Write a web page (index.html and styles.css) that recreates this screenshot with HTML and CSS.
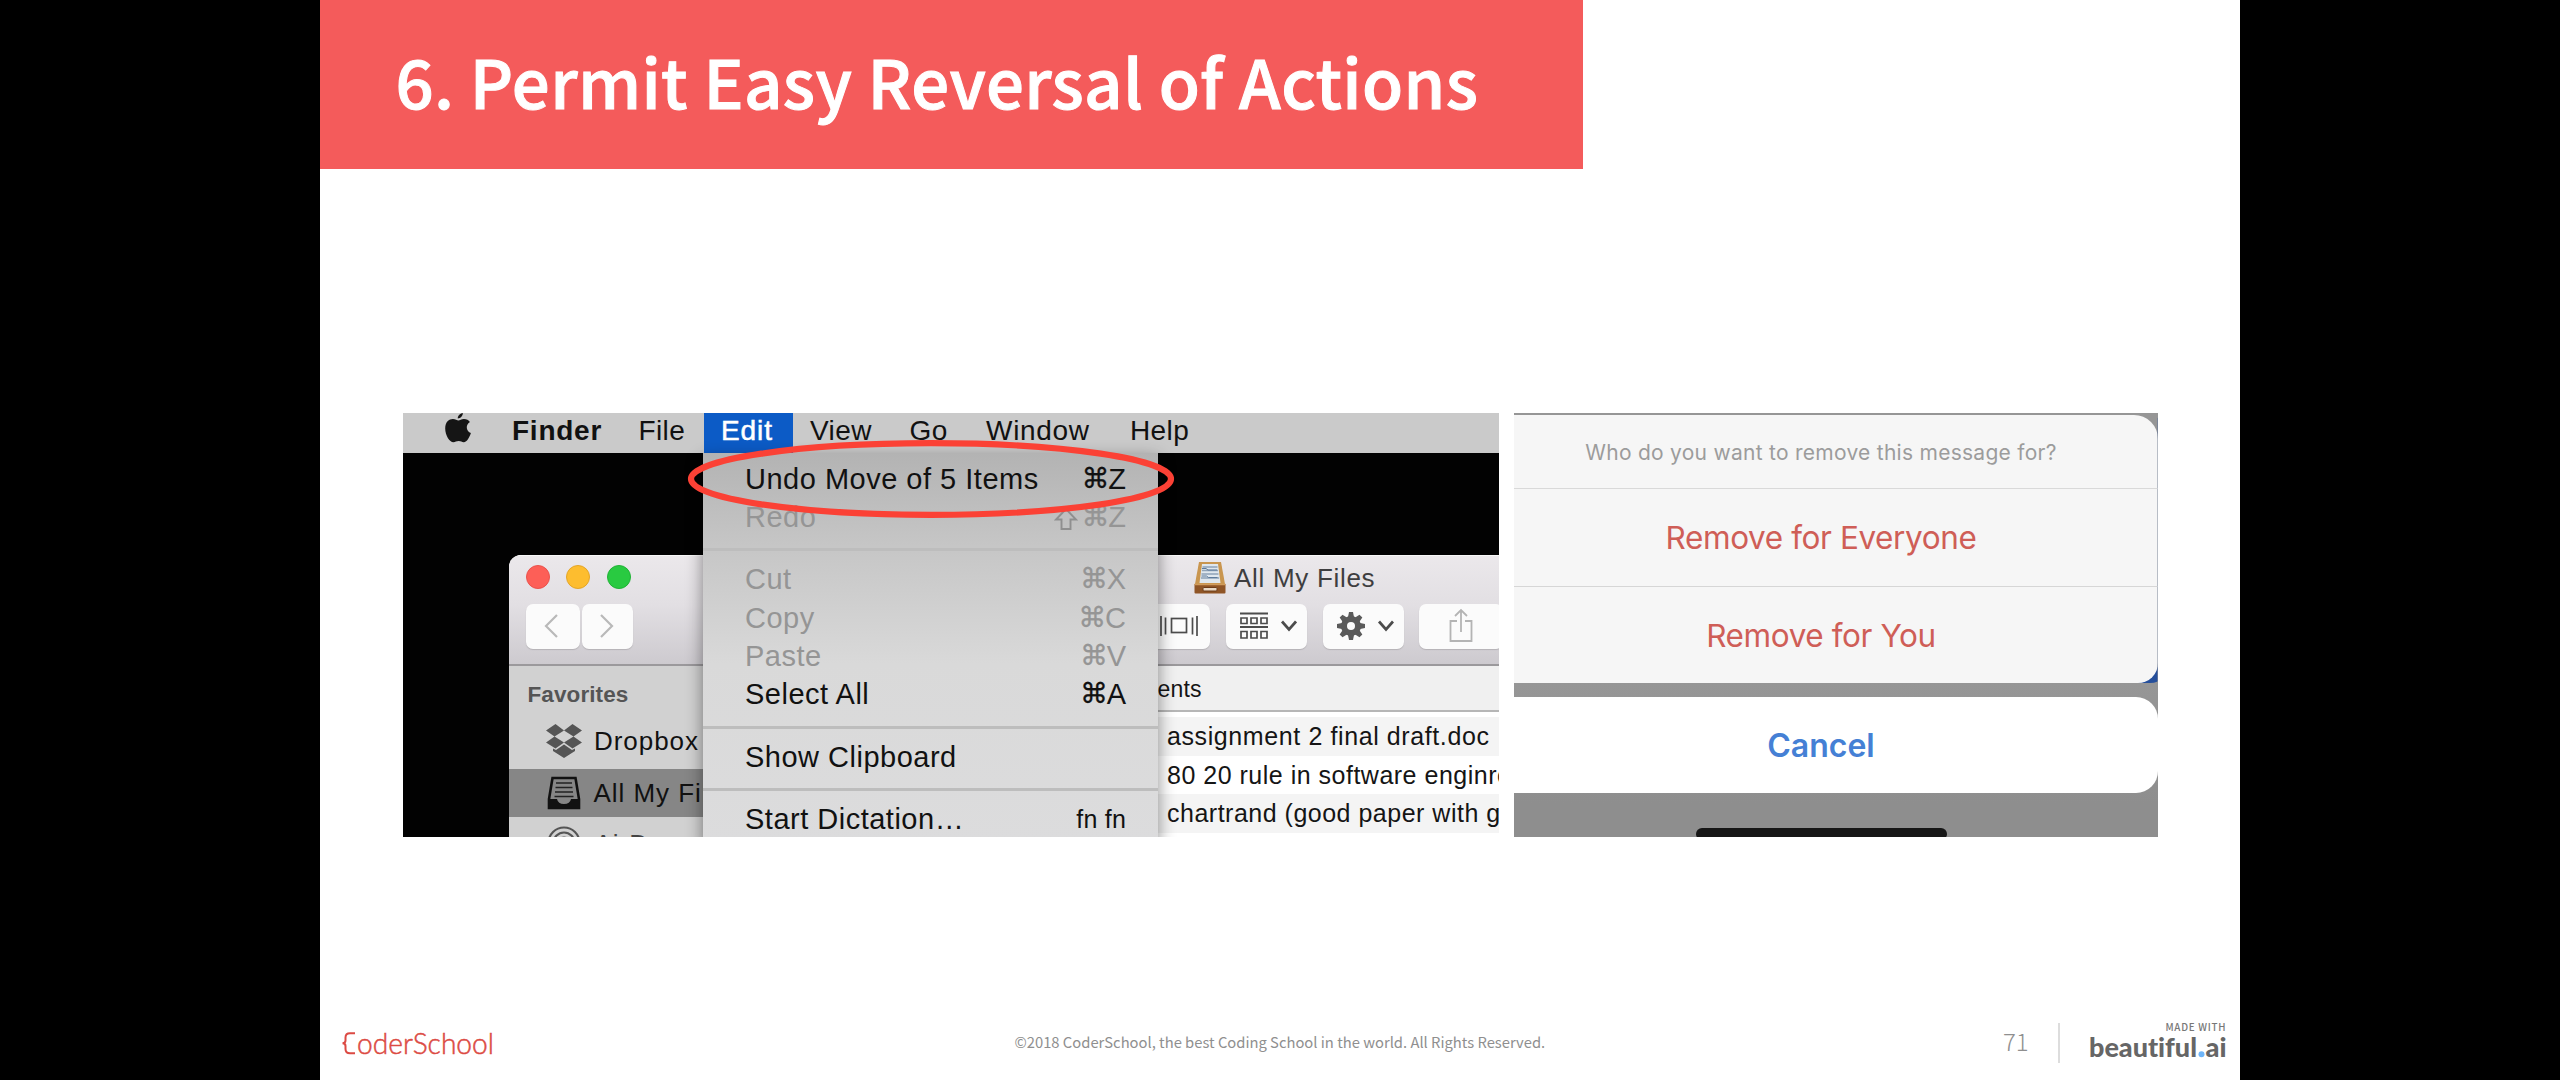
FILE: index.html
```html
<!DOCTYPE html>
<html lang="en">
<head>
<meta charset="utf-8">
<title>6. Permit Easy Reversal of Actions</title>
<link rel="stylesheet" href="styles.css">
</head>
<body>
<main class="slide">
  <h1 class="banner"><span>6. Permit Easy Reversal of Actions</span></h1>

  <section class="examples">
    <div class="mac">
      <nav class="menubar">
        <svg class="apple" width="26" height="31" viewBox="0 0 26 31"><path fill="#151515" d="M17.8 0c.2 2.500-2.200 5.500-5 5.500C12.500 3 15 .4 17.800 0ZM13.500 7.400c1.300 0 3-1.500 5.500-1.400 2.600.1 4.700 1.200 5.900 3-4.700 3-3.800 9.200 1 11-1.500 4.500-4 9-7 9.200-2 .1-2.800-1.200-5.200-1.200-2.500 0-3.300 1.200-5.200 1.200C4.500 29.200.2 22 .2 15.400.2 9 4 6 7.900 6c2.500 0 4.100 1.400 5.600 1.400Z"/></svg>
        <b>Finder</b><span>File</span><span class="open">Edit</span><span>View</span><span>Go</span><span>Window</span><span>Help</span>
      </nav>
      <div class="desktop">
        <div class="window">
          <header class="chrome">
            <div class="titlebar">
              <i class="light red"></i><i class="light yellow"></i><i class="light green"></i>
              <div class="wtitle">
                <svg width="32" height="33" viewBox="0 0 32 33"><path fill="#c9964f" d="M5 1h22l4 22H1z"/><path fill="#dfe7ee" d="M8 3h16l2.500 19h-21z"/><path d="M8.500 6h15M8 9.500h16M7.500 13h17M7 17h18" stroke="#8fa3b8" stroke-width="1.300"/><path d="M8 7.500h4l2 1.500h9M7.500 15h5l2 1.500h9" stroke="#5d7b9c" fill="none"/><path fill="#8f5526" d="M.5 23h31v8.500q0 1-1 1h-29q-1 0-1-1z"/><path d="M.5 23.500h31" stroke="#d09c5c" stroke-width="1.500"/><rect x="9" y="26.500" width="14" height="3.500" rx="1" fill="#e9d9c6" stroke="#6c3c18"/></svg>
                <span>All My Files</span>
              </div>
            </div>
            <div class="toolbar">
              <div class="btn back"><svg width="14" height="24" viewBox="0 0 14 24"><path d="M13 1 2 12l11 11" fill="none" stroke="#b9b9b9" stroke-width="2.200"/></svg></div>
              <div class="btn fwd"><svg width="14" height="24" viewBox="0 0 14 24"><path d="M1 1l11 11L1 23" fill="none" stroke="#b9b9b9" stroke-width="2.200"/></svg></div>
              <div class="btn flow"><svg width="38" height="24" viewBox="0 0 38 24"><path d="M1 2v20M5.500 3.500v17M32.500 3.500v17M37 2v20" stroke="#4c4c4c" stroke-width="1.700"/><rect x="11.500" y="4.500" width="15" height="14" fill="none" stroke="#4c4c4c" stroke-width="1.700"/></svg></div>
              <div class="btn arrange"><svg width="57" height="28" viewBox="0 0 57 28"><path d="M0 1.500h28M0 15h28" stroke="#4c4c4c" stroke-width="1.800"/><g fill="none" stroke="#4c4c4c" stroke-width="1.700"><path d="M1 6h6v5.500H1zM11 6h6v5.500h-6zM21 6h6v5.500h-6zM1 19.500h6V26H1zM11 19.500h6V26h-6zM21 19.500h6V26h-6z"/><path d="m42 9.500 7 8 7-8" stroke-width="2.700"/></g></svg></div>
              <div class="btn gear"><svg width="57" height="28" viewBox="0 0 57 28"><g transform="translate(14 14)"><g fill="#5a5a5a"><circle r="10"/><path id="tooth" d="M-3.200-8-2-14h4l1.200 6z"/><use href="#tooth" transform="rotate(45)"/><use href="#tooth" transform="rotate(90)"/><use href="#tooth" transform="rotate(135)"/><use href="#tooth" transform="rotate(180)"/><use href="#tooth" transform="rotate(225)"/><use href="#tooth" transform="rotate(270)"/><use href="#tooth" transform="rotate(315)"/></g><circle r="4" fill="#fbfbfb"/></g><path d="m42 9.500 7 8 7-8" fill="none" stroke="#4c4c4c" stroke-width="2.700"/></svg></div>
              <div class="btn share"><svg width="24" height="36" viewBox="0 0 24 36"><path d="M8 13H1.500v20h21V13H16M12 24V2M6 8l6-6 6 6" fill="none" stroke="#b4b4b4" stroke-width="1.800"/></svg></div>
            </div>
          </header>
          <div class="wbody">
            <aside class="sidebar">
              <div class="heading">Favorites</div>
              <div class="place"><svg width="36" height="34" viewBox="0 0 36 34"><path fill="#555" d="M9.500 0 18 6.500 8.500 12.500 0 6.500zM26.500 0 18 6.500l9.500 6L36 6.500zM0 18.500l8.500-6 9.500 6-8.500 6zM36 18.500l-8.500-6-9.500 6 8.500 6zM18 20.500l8 5.500 3-1.500v2.500l-11 7-11-7v-2.500l3 1.500z"/></svg><span>Dropbox</span></div>
              <div class="place selected"><svg width="34" height="34" viewBox="0 0 34 34"><path d="M5.500 2h23l3.500 21v9H2v-9z" fill="none" stroke="#111" stroke-width="2.600"/><path fill="#111" d="M2 23h8q1 5 7 5t7-5h8v9H2z"/><path d="M9 7h16M8.500 11.500h17M8 16h18M7.500 20.500h19" stroke="#222" stroke-width="1.700"/></svg><span>All My Files</span></div>
              <div class="place"><svg width="34" height="34" viewBox="0 0 34 34"><g fill="none" stroke="#555" stroke-width="2.200"><circle cx="17" cy="17" r="15.500"/><circle cx="17" cy="17" r="10.500"/><circle cx="17" cy="17" r="5.500"/></g></svg><span>AirDrop</span></div>
            </aside>
            <div class="files">
              <div class="group">ents</div>
              <div class="file odd">assignment 2 final draft.doc</div>
              <div class="file long">80 20 rule in software enginre</div>
              <div class="file odd long">chartrand (good paper with g</div>
            </div>
          </div>
        </div>
      </div>
      <div class="menu">
        <div class="item"><span>Undo Move of 5 Items</span><kbd><i>⌘</i>Z</kbd></div>
        <div class="item off"><span>Redo</span><kbd><svg class="shift" width="24" height="24" viewBox="0 0 24 24"><path d="M12 2 2 12.500h5.500V22h9v-9.500H22z" fill="none" stroke="#8f8f8f" stroke-width="1.900"/></svg><i>⌘</i>Z</kbd></div>
        <hr>
        <div class="item off"><span>Cut</span><kbd><i>⌘</i>X</kbd></div>
        <div class="item off"><span>Copy</span><kbd><i>⌘</i>C</kbd></div>
        <div class="item off"><span>Paste</span><kbd><i>⌘</i>V</kbd></div>
        <div class="item"><span>Select All</span><kbd><i>⌘</i>A</kbd></div>
        <hr>
        <div class="item"><span>Show Clipboard</span></div>
        <hr>
        <div class="item"><span>Start Dictation…</span><kbd class="fn">fn fn</kbd></div>
      </div>
      <svg class="ring" width="488" height="80" viewBox="0 0 488 80"><ellipse cx="244" cy="40" rx="240" ry="35.800" fill="none" stroke="#fb4135" stroke-width="6.200"/></svg>
    </div>

    <div class="phone">
      <div class="sheet">
        <div class="prompt"><span>Who do you want to remove this message for?</span></div>
        <div class="choice">Remove for Everyone</div>
        <div class="choice">Remove for You</div>
      </div>
      <div class="cancel">Cancel</div>
      <div class="home"></div>
    </div>
  </section>

  <footer class="footer">
    <svg class="logo" width="156" height="30" viewBox="0 0 156 30"><path d="M15 5.300H10Q5.500 5.300 5.500 9.500v3q0 2.700-3 2.700 3 0 3 2.700v3q0 4.300 4.500 4.300h5" fill="none" stroke="#dc4a43" stroke-width="2"/><text x="17" y="26" textLength="137" lengthAdjust="spacingAndGlyphs">oderSchool</text></svg>
    <p class="copyright">©2018 CoderSchool, the best Coding School in the world. All Rights Reserved.</p>
    <div class="page">71</div>
    <svg class="brand" width="140" height="44" viewBox="0 0 140 44"><text class="made" x="76.500" y="9.500" textLength="60" lengthAdjust="spacing">MADE WITH</text><text class="name" x="0" y="36" textLength="108" lengthAdjust="spacingAndGlyphs">beautiful</text><circle cx="112.500" cy="33.200" r="3" fill="#6fb5f8"/><text class="name" x="116.500" y="36" textLength="21" lengthAdjust="spacingAndGlyphs">ai</text></svg>
  </footer>
</main>
</body>
</html>
```
FILE: styles.css
```css
* { box-sizing: border-box; }
body { margin: 0; background: #000; height: 1080px; overflow: hidden; font-family: "Liberation Sans", Arial, sans-serif; }
svg { display: block; flex: none; }
.slide { width: 1920px; height: 1080px; margin: 0 auto; background: #fff; display: flex; flex-direction: column; }

.banner { margin: 0; width: 1263px; height: 169px; padding-left: 75.500px; background: #f45b5b; color: #fff; font: 500 67px/160px "Noto Sans CJK SC", sans-serif; letter-spacing: .36px; -webkit-text-stroke: 1px #fff; white-space: nowrap; }

.examples { display: flex; gap: 15px; margin-top: 243.500px; padding-left: 82.500px; height: 424.500px; }
.mac { position: relative; width: 1096px; height: 424.500px; overflow: hidden; background: #020202; white-space: nowrap; }
.menubar { height: 40.500px; background: #cacaca; color: #111; display: grid; grid-template-columns: 67.500px 126.500px 65.500px 88.500px 99.500px 76.500px 144px auto; padding-left: 42px; font-size: 28px; line-height: 35.500px; letter-spacing: .4px; }
.menubar b { letter-spacing: .75px; }
.menubar .open { background: #0c5bc6; color: #fff; padding-left: 17px; letter-spacing: .9px; -webkit-text-stroke: .5px #fff; }
.menubar .open ~ span { padding-left: 17.500px; }
.menubar span:nth-of-type(5) { letter-spacing: .7px; }
.desktop { position: relative; height: 384px; }

.window { position: absolute; left: 106px; top: 101.500px; width: 1040px; height: 290px; border-radius: 12px 0 0 0; overflow: hidden; background: #fff; }
.chrome { height: 111px; background: linear-gradient(#ebe8eb, #e2dfe3 45%, #cdcacf); border-bottom: 2px solid #9b999c; border-top: 1px solid #f8f8f8; }
.titlebar { display: flex; height: 48.500px; padding: 9.500px 0 0 17px; }
.light { width: 24px; height: 24px; border-radius: 50%; margin-right: 16.500px; border: 1px solid; }
.red { background: #fd5f57; border-color: #e9534d; }
.yellow { background: #fdbd2f; border-color: #e3a529; }
.green { background: #29ca41; border-color: #21b236; }
.wtitle { display: flex; margin-left: 547px; margin-top: -4px; gap: 8px; color: #3e3e40; font-size: 26px; line-height: 34px; letter-spacing: .7px; }
.toolbar { display: flex; padding-left: 17px; }
.btn { height: 44.500px; background: #fbfbfb; border-radius: 7px; display: flex; align-items: center; justify-content: center; box-shadow: 0 1px 1px #b5b2b6; }
.back { width: 54px; padding-right: 4px; }
.fwd { width: 51.500px; margin-left: 2px; }
.flow { width: 90px; margin-left: 487px; padding-left: 28px; }
.arrange, .gear { width: 81px; margin-left: 16px; padding-left: 4px; }
.share { width: 84px; margin-left: 15px; }

.wbody { display: flex; height: 190px; }
.sidebar { width: 195px; background: #d1d1d1; color: #111; font-size: 26px; letter-spacing: .95px; }
.heading { padding: 13px 0 0 19px; height: 49px; font-size: 22.500px; line-height: 32px; font-weight: bold; color: #555; letter-spacing: .1px; }
.place { display: flex; align-items: center; gap: 12.500px; height: 54.500px; padding: 0 0 1px 37px; line-height: 44px; }
.sidebar .selected { background: #868686; gap: 13px; height: 47.500px; padding-bottom: 0; }
.place + .place svg { margin-left: 1px; }
.place:last-child { gap: 14px; }
.place:last-child span { padding-top: 2px; color: #444; }
.files { width: 845px; color: #151515; font-size: 25px; letter-spacing: .6px; }
.group { height: 46.500px; background: #f0f0f0; border-bottom: 2px solid #b6b6b6; padding-left: 454px; font-size: 23px; line-height: 46px; letter-spacing: .2px; margin-bottom: 5px; }
.file { height: 38.500px; padding-left: 463.500px; line-height: 38px; }
.long { letter-spacing: .5px; }
.odd { background: #f4f4f4; }

.menu { position: absolute; left: 300.500px; top: 40.500px; width: 454.500px; height: 390px; padding-top: 6.500px; background: linear-gradient(#b3b3b3, #c6c6c6 24%, #d9d9d9 54%, #dcdcdd); box-shadow: 0 6px 16px rgba(0,0,0,.45); color: #111; font-size: 29px; }
.item { display: flex; justify-content: space-between; height: 38.400px; line-height: 38.400px; padding: 0 31.500px 0 42px; letter-spacing: .5px; }
.item kbd { display: flex; justify-content: flex-end; font: 29px/38.400px "Liberation Sans", Arial, sans-serif; letter-spacing: 0; width: 80px; }
.item kbd i { font: 28px/38px "DejaVu Sans", sans-serif; width: 26.500px; -webkit-text-stroke: .3px; }
.shift { margin: 9px 4px 0 0; }
.item kbd.fn { font-size: 25px; letter-spacing: .2px; }
.off { color: #959595; }
.menu hr { height: 3px; border: 0; margin: 12px 0 9px; background: #bdbdbd; }
.ring { position: absolute; left: 284px; top: 26px; }

.phone { width: 644px; height: 424.500px; padding-top: 2px; background: linear-gradient(#969696 270px, #8e8e8e 390px); overflow: hidden; font-family: Inter, sans-serif; text-align: center; }
.sheet { height: 268.500px; background: #f6f6f6; border-radius: 0 24px 20px 0; box-shadow: 14px -14px 0 -1px #969696, 12px 0 0 #264f9b; clip-path: inset(-2px 0 0 0); }
.prompt { height: 74.500px; border-bottom: 1.500px solid #d9d9d9; color: #9c9c9c; font-size: 21px; line-height: 75px; letter-spacing: .27px; padding-right: 29px; }
.choice { height: 97.500px; line-height: 98px; font-size: 31.500px; letter-spacing: -.4px; color: #cf5e57; padding-right: 29px; }
.choice:nth-child(2) { border-bottom: 1.500px solid #d6d6d6; }
.cancel { height: 96px; margin-top: 13.500px; line-height: 97px; background: #fff; border-radius: 0 22px 22px 0; color: #4580d5; font-size: 32px; font-weight: 600; padding-right: 29px; }
.home { width: 251px; height: 12px; border-radius: 6px; background: #161616; margin: 35.500px 0 0 182px; }

.footer { display: grid; grid-template-columns: 160px auto 112px 180px; height: 80px; margin-top: auto; padding-left: 20px; font-family: "Noto Sans CJK SC", sans-serif; }
.logo { margin-top: 28px; }
.logo text { font: 300 30px Lato, sans-serif; fill: #dc4a43; stroke: #dc4a43; stroke-width: .5px; }
.copyright { margin: 0; padding-left: 514.500px; padding-top: 27px; font-size: 14.770px; line-height: 30px; color: #8f8f8f; white-space: nowrap; }
.page { margin: 0; padding-left: 55px; height: 40px; margin-top: 23px; border-right: 2px solid #ddd; color: #8f8f8f; font-size: 24px; font-weight: 300; line-height: 36px; }
.brand { margin: 21px 0 0 29px; }
.made { font: 500 9.800px "Noto Sans CJK SC", sans-serif; fill: #777; }
.name { font: 900 27px Lato, sans-serif; font-variant-ligatures: none; fill: #666; }
```
